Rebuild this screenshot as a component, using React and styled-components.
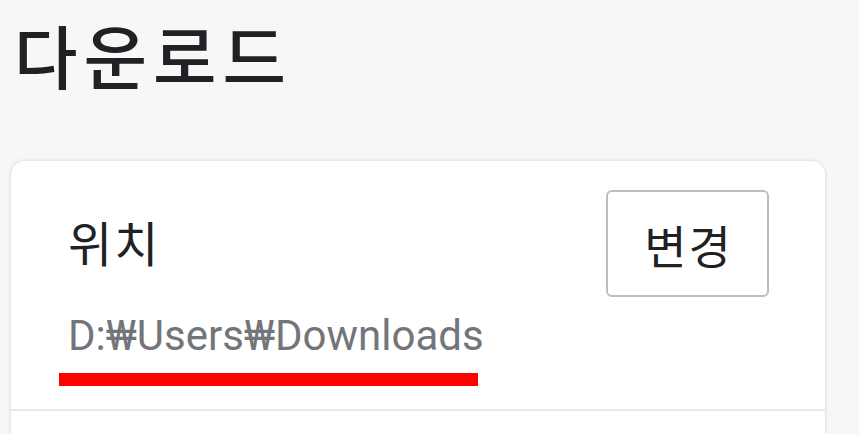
import React from "react";
import styled, { createGlobalStyle } from "styled-components";

const Global = createGlobalStyle`
  html, body { margin: 0; padding: 0; }
  body {
    background: #f7f7f7;
    font-family: Roboto, "Noto Sans CJK KR", sans-serif;
    overflow: hidden;
  }
`;

const Page = styled.div`
  width: 859px;
  height: 434px;
  box-sizing: border-box;
  padding: 0 34px 0 11px;
  display: flex;
  flex-direction: column;
`;

const Title = styled.h1`
  margin: 4px 0 0 3px;
  height: 103px;
  font-family: "Noto Sans CJK KR", sans-serif;
  font-size: 69px;
  line-height: 101px;
  font-weight: 500;
  color: #202124;
  letter-spacing: 6px;
`;

const Card = styled.section`
  margin-top: 54px;
  background: #fff;
  border-radius: 14px 14px 0 0;
  box-shadow: 0 0 4px rgba(0, 0, 0, 0.14), 0 1px 2px rgba(0, 0, 0, 0.06);
  flex: 1;
  display: flex;
  flex-direction: column;
`;

const Row = styled.div`
  display: flex;
  align-items: flex-start;
  justify-content: space-between;
  padding: 29px 56px 0 57px;
  height: 250px;
  box-sizing: border-box;
  border-bottom: 2px solid #e8e8e8;
`;

const Info = styled.div`
  display: flex;
  flex-direction: column;
`;

const Label = styled.div`
  margin-top: 24px;
  font-family: "Noto Sans CJK KR", sans-serif;
  font-size: 48px;
  line-height: 54px;
  letter-spacing: 2px;
  color: #202124;
`;

const Path = styled.div`
  margin-top: 42px;
  font-family: Roboto, "Noto Sans CJK KR", sans-serif;
  font-size: 42px;
  line-height: 52px;
  color: #72767a;
`;

const Mark = styled.div`
  margin: 11px 0 0 -9px;
  width: 419px;
  height: 13px;
  background: #ff0000;
`;

const Button = styled.button`
  width: 163px;
  height: 107px;
  box-sizing: border-box;
  border: 2px solid #bdbdbd;
  border-radius: 6px;
  background: #fff;
  font-family: "Noto Sans CJK KR", sans-serif;
  font-size: 46px;
  letter-spacing: 2px;
  color: #202124;
  padding: 0 0 0 2px;
  display: flex;
  align-items: center;
  justify-content: center;
`;

export default function App() {
  return (
    <>
      <Global />
      <Page>
        <Title>다운로드</Title>
        <Card>
          <Row>
            <Info>
              <Label>위치</Label>
              <Path>D:₩Users₩Downloads</Path>
              <Mark />
            </Info>
            <Button>변경</Button>
          </Row>
        </Card>
      </Page>
    </>
  );
}
